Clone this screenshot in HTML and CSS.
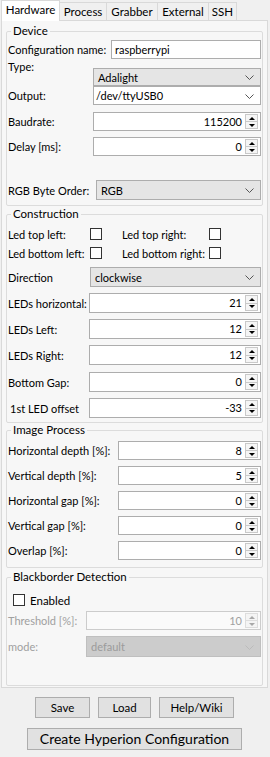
FILE: index.html
```html
<!DOCTYPE html>
<html>
<head>
<meta charset="utf-8">
<link rel="stylesheet" href="styles.css">
</head>
<body>
<div class="tabs">
  <div class="tab tab-active tab-hw">Hardware</div>
  <div class="tab tab-proc">Process</div>
  <div class="tab tab-grab">Grabber</div>
  <div class="tab tab-ext">External</div>
  <div class="tab tab-ssh">SSH</div>
</div>
<div class="pane">
  <fieldset class="group g-device">
    <legend>Device</legend>
    <div class="row r-config"><span class="lbl">Configuration name:</span><div class="edit">raspberrypi</div></div>
    <div class="row r-type"><span class="lbl lbl-top">Type:</span><div class="combo combo-bottom"><span class="ctext">Adalight</span><svg class="chev" width="9" height="6" viewBox="0 0 9 6"><polyline points="0.5,0.5 4.5,4.5 8.5,0.5" fill="none" stroke="#555" stroke-width="1"/></svg></div></div>
    <div class="row r-output"><span class="lbl">Output:</span><div class="combo combo-edit"><span class="ctext">/dev/ttyUSB0</span><svg class="chev" width="9" height="6" viewBox="0 0 9 6"><polyline points="0.5,0.5 4.5,4.5 8.5,0.5" fill="none" stroke="#555" stroke-width="1"/></svg></div></div>
    <div class="row r-baud"><span class="lbl">Baudrate:</span><div class="spin"><span class="val">115200</span><div class="btns"><span class="sb sb-up"></span><span class="sb sb-down"></span></div></div></div>
    <div class="row r-delay"><span class="lbl">Delay [ms]:</span><div class="spin"><span class="val">0</span><div class="btns"><span class="sb sb-up"></span><span class="sb sb-down"></span></div></div></div>
    <div class="row r-rgb"><span class="lbl">RGB Byte Order:</span><div class="combo"><span class="ctext">RGB</span><svg class="chev" width="9" height="6" viewBox="0 0 9 6"><polyline points="0.5,0.5 4.5,4.5 8.5,0.5" fill="none" stroke="#555" stroke-width="1"/></svg></div></div>
  </fieldset>

  <fieldset class="group g-cons">
    <legend>Construction</legend>
    <div class="row r-corner r-corner1">
      <span class="lbl c-l1">Led top left:</span><span class="check"></span>
      <span class="lbl c-l2">Led top right:</span><span class="check"></span>
    </div>
    <div class="row r-corner r-corner2">
      <span class="lbl c-l1">Led bottom left:</span><span class="check"></span>
      <span class="lbl c-l2">Led bottom right:</span><span class="check"></span>
    </div>
    <div class="row r-dir"><span class="lbl">Direction</span><div class="combo"><span class="ctext">clockwise</span><svg class="chev" width="9" height="6" viewBox="0 0 9 6"><polyline points="0.5,0.5 4.5,4.5 8.5,0.5" fill="none" stroke="#555" stroke-width="1"/></svg></div></div>
    <div class="row r-c"><span class="lbl">LEDs horizontal:</span><div class="spin"><span class="val">21</span><div class="btns"><span class="sb sb-up"></span><span class="sb sb-down"></span></div></div></div>
    <div class="row r-c"><span class="lbl">LEDs Left:</span><div class="spin"><span class="val">12</span><div class="btns"><span class="sb sb-up"></span><span class="sb sb-down"></span></div></div></div>
    <div class="row r-c"><span class="lbl">LEDs Right:</span><div class="spin"><span class="val">12</span><div class="btns"><span class="sb sb-up"></span><span class="sb sb-down"></span></div></div></div>
    <div class="row r-c r-c7"><span class="lbl">Bottom Gap:</span><div class="spin"><span class="val">0</span><div class="btns"><span class="sb sb-up"></span><span class="sb sb-down"></span></div></div></div>
    <div class="row r-c"><span class="lbl lbl-indent">1st LED offset</span><div class="spin"><span class="val">-33</span><div class="btns"><span class="sb sb-up"></span><span class="sb sb-down"></span></div></div></div>
  </fieldset>

  <fieldset class="group g-img">
    <legend>Image Process</legend>
    <div class="row r-i r-i1"><span class="lbl">Horizontal depth [%]:</span><div class="spin"><span class="val">8</span><div class="btns"><span class="sb sb-up"></span><span class="sb sb-down"></span></div></div></div>
    <div class="row r-i"><span class="lbl">Vertical depth [%]:</span><div class="spin"><span class="val">5</span><div class="btns"><span class="sb sb-up"></span><span class="sb sb-down"></span></div></div></div>
    <div class="row r-i"><span class="lbl">Horizontal gap [%]:</span><div class="spin"><span class="val">0</span><div class="btns"><span class="sb sb-up"></span><span class="sb sb-down"></span></div></div></div>
    <div class="row r-i"><span class="lbl">Vertical gap [%]:</span><div class="spin"><span class="val">0</span><div class="btns"><span class="sb sb-up"></span><span class="sb sb-down"></span></div></div></div>
    <div class="row r-i"><span class="lbl">Overlap [%]:</span><div class="spin"><span class="val">0</span><div class="btns"><span class="sb sb-up"></span><span class="sb sb-down"></span></div></div></div>
  </fieldset>

  <fieldset class="group g-bb">
    <legend>Blackborder Detection</legend>
    <div class="row r-enabled"><span class="check"></span><span class="lbl-enabled">Enabled</span></div>
    <div class="row r-b r-thr"><span class="lbl lbl-dis">Threshold [%]:</span><div class="spin spin-dis"><span class="val">10</span><div class="btns"><span class="sb sb-up"></span><span class="sb sb-down"></span></div></div></div>
    <div class="row r-b r-mode"><span class="lbl lbl-dis">mode:</span><div class="combo combo-dis"><span class="ctext">default</span><svg class="chev" width="9" height="6" viewBox="0 0 9 6"><polyline points="0.5,0.5 4.5,4.5 8.5,0.5" fill="none" stroke="#bbb" stroke-width="1"/></svg></div></div>
  </fieldset>
</div>

<div class="btnrow">
  <button class="btn btn-save">Save</button>
  <button class="btn btn-load">Load</button>
  <button class="btn btn-help">Help/Wiki</button>
</div>
<div class="btnrow btnrow-big">
  <button class="btn btn-create">Create Hyperion Configuration</button>
</div>
</body>
</html>
```

FILE: styles.css
```css
* { box-sizing: border-box; }
html, body { margin: 0; padding: 0; }
body {
  width: 270px;
  height: 757px;
  background: #f0f0f0;
  font-family: Lato, "Noto Sans", sans-serif;
  font-size: 11px;
  color: #000;
  overflow: hidden;
}

/* Tabs */
.tabs {
  display: flex;
  height: 20px;
  padding-left: 1px;
  align-items: flex-end;
}
.tab {
  height: 18px;
  line-height: 17px;
  text-align: center;
  border: 1px solid #d9d9d9;
  border-bottom: none;
  margin-left: -1px;
  background: #f0f0f0;
  white-space: nowrap;
  font-size: 11.5px;
}
.tab-hw { width: 59px; margin-left: 0; }
.tab-proc { width: 48px; }
.tab-grab { width: 52px; }
.tab-ext { width: 52px; }
.tab-ssh { width: 29px; }
.tab-active {
  height: 21px;
  line-height: 18px;
  background: #ffffff;
  position: relative;
  z-index: 1;
  margin-bottom: -1px;
}

/* Pane */
.pane {
  margin-left: 1px;
  width: 267px;
  height: 668px;
  border: 1px solid #d9d9d9;
  background: #f7f7f7;
  padding-top: 3px;
}

.group {
  margin: 0 4px;
  padding: 0 1px 5px 1px;
  border: 1px solid #dcdcdc;
  border-radius: 2px;
}
.group legend {
  padding: 0 2px;
  margin-left: 3px;
  line-height: 14px;
  font-size: 11.5px;
}

.row {
  display: flex;
  align-items: center;
}
.lbl {
  flex: none;
  white-space: nowrap;
}

/* inputs */
.edit {
  flex: 1;
  height: 19px;
  border: 1px solid #adadad;
  background: #fff;
  padding-left: 3px;
  line-height: 17px;
}
.combo {
  flex: 1;
  height: 19px;
  border: 1px solid #adadad;
  background: #e5e5e5;
  display: flex;
  align-items: center;
  padding: 0 6px 0 4px;
}
.combo .ctext { flex: 1; }
.combo-edit { background: #fff; padding-left: 2px; }
.combo-dis { background: #cccccc; border-color: #bfbfbf; color: #9b9b9b; }
.chev { flex: none; margin-top: 2px; }

.spin {
  flex: 1;
  height: 20px;
  border: 1px solid #adadad;
  background: #fff;
  display: flex;
}
.spin .val {
  flex: 1;
  text-align: right;
  line-height: 18px;
  padding-right: 3px;
}
.spin .btns {
  width: 15px;
  display: flex;
  flex-direction: column;
  padding: 1px 2px 1px 0;
}
.sb {
  flex: 1;
  border: 1px solid #c9c9c9;
  background: #f5f5f5;
  display: flex;
  align-items: center;
  justify-content: center;
}
.sb-up { border-bottom: none; }
.sb-up::after {
  content: "";
  border-left: 3px solid transparent;
  border-right: 3px solid transparent;
  border-bottom: 3px solid #000;
}
.sb-down::after {
  content: "";
  border-left: 3px solid transparent;
  border-right: 3px solid transparent;
  border-top: 3px solid #000;
}
.spin-dis { background: #fafafa; border-color: #cccccc; color: #a0a0a0; }
.spin-dis .sb { border-color: #dddddd; background: #f4f4f4; }
.spin-dis .sb-up::after { border-bottom-color: #a8a8a8; }
.spin-dis .sb-down::after { border-top-color: #a8a8a8; }

.check {
  flex: none;
  width: 12px;
  height: 12px;
  border: 1px solid #333;
  background: #fff;
}

/* Device rows */
.g-device .lbl { width: 85px; }
.r-config { margin-top: 2px; }
.r-config .lbl { width: 103px; }
.r-type { height: 26px; margin-top: 1px; align-items: stretch; }
.lbl-top { line-height: 14px; align-self: flex-start; }
.combo-bottom { align-self: flex-end; height: 18px; }
.r-output { height: 19px; margin-top: 0; }
.r-baud { margin-top: 7px; }
.r-baud .spin, .r-delay .spin { height: 19px; }
.r-baud .spin .val, .r-delay .spin .val { line-height: 17px; }
.r-delay { margin-top: 6px; }
.r-rgb { margin-top: 24px; }
.r-rgb .lbl { width: 88px; }
.r-rgb .combo { height: 20px; }

/* Construction */
.g-cons { margin-top: 1px; padding-bottom: 4px; }
.r-corner { height: 12px; }
.r-corner1 { margin-top: 7px; }
.r-corner2 { margin-top: 7px; }
.c-l1 { width: 82px; }
.c-l2 { width: 87px; margin-left: 20px; }
.r-dir { margin-top: 8px; }
.r-dir .lbl { width: 82px; }
.r-dir .combo { height: 20px; }
.r-c { margin-top: 6px; }
.r-c7 { margin-top: 7px; }
.r-c .lbl { width: 81px; }
.lbl-indent { padding-left: 2px; }

/* Image process */
.g-img { margin-top: 0; padding-bottom: 7px; }
.r-i { margin-top: 6px; }
.r-i1 { margin-top: 4px; }
.r-i .lbl { width: 110px; }
.r-i .spin { height: 19px; }
.r-i .spin .val { line-height: 17px; }

/* Blackborder */
.g-bb { margin-top: 2px; height: 116px; }
.r-enabled { margin-top: 10px; padding-left: 5px; height: 12px; }
.lbl-enabled { margin-left: 5px; font-size: 11.5px; }
.r-b .lbl { width: 78px; }
.lbl-dis { color: #a0a0a0; }
.r-thr { margin-top: 5px; }
.r-thr .spin { height: 19px; }
.r-thr .spin .val { line-height: 17px; }
.r-mode { margin-top: 6px; }
.r-mode .combo { height: 21px; }

/* Bottom buttons */
.btnrow {
  display: flex;
  justify-content: center;
  gap: 8px;
  margin-top: 9px;
  padding-right: 1px;
}
.btn {
  font-family: Lato, "Noto Sans", sans-serif;
  font-size: 11.5px;
  height: 21px;
  border: 1px solid #adadad;
  background: #e1e1e1;
  color: #000;
  padding: 0;
  line-height: 19px;
}
.btn-save { width: 55px; }
.btn-load { width: 53px; }
.btn-help { width: 75px; }
.btnrow-big { margin-top: 10px; }
.btn-create { width: 215px; height: 22px; font-size: 14px; line-height: 20px; white-space: nowrap; }
```
